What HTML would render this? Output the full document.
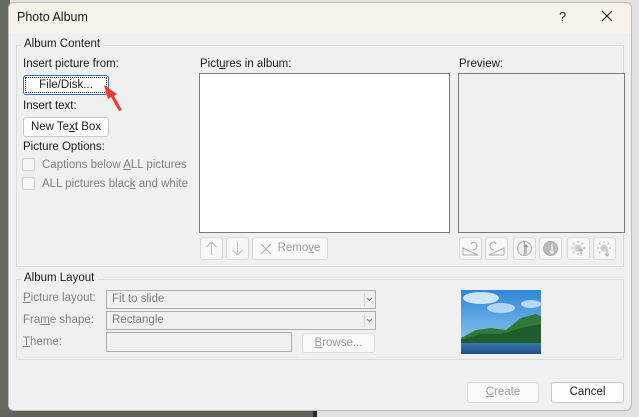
<!DOCTYPE html>
<html><head><style>
*{margin:0;padding:0;box-sizing:border-box}
body{width:639px;height:417px;overflow:hidden;position:relative;background:#e2e2e2;font-family:"Liberation Sans",sans-serif;font-size:11.5px;color:#1a1a1a}
.a{position:absolute;white-space:nowrap}
.g{color:#7f7f7f}
.btn{position:absolute;background:#fdfdfd;border:1px solid #c9c9c9;border-radius:3px;text-align:center;line-height:18px}
.dis{color:#9a9a9a;border-color:#dadada;background:#f9f9f9}
.grp{position:absolute;border:1px solid #dcdcdc}
.lbl{position:absolute;background:#f0f0f0;padding:0 3px}
.sel{position:absolute;border:1px solid #adadad;background:#f0f0f0;color:#7a7a7a;padding-left:5px;line-height:17px}
.sel:after{content:"";position:absolute;right:0;top:2px;width:10px;height:13px;border-left:1px solid #d5d5d5}
.chev{position:absolute;right:2px;top:6px}
.ib{position:absolute;width:23px;height:23px;border:1px solid #d8d8d8;border-radius:3px;background:#f7f7f7}
.cb{position:absolute;width:13px;height:13px;border:1px solid #cfcfcf;border-radius:2px;background:#f6f6f6}
u{text-decoration:underline}
</style></head><body>
<div class="a" style="left:0;top:0;width:10px;height:417px;background:#676b5f"></div>
<div class="a" style="left:0;top:410px;width:313px;height:7px;background:#5f6359"></div>
<div class="a" style="left:313px;top:410px;width:4px;height:7px;background:#2a2a2a"></div>
<div class="a" style="left:8px;top:2px;width:624px;height:409px;background:#f0f0f0;border:1px solid #bdbdbd;border-radius:6px;overflow:hidden">
 <div class="a" style="left:0;top:0;width:624px;height:30px;background:#f8f3ea"></div>
</div>
<div class="a" style="left:17px;top:10px;font-size:12.5px">Photo Album</div>
<div class="a" style="left:559px;top:9px;font-size:13px">?</div>
<svg class="a" style="left:601px;top:10px" width="12" height="12"><path d="M1 1L11 11M11 1L1 11" stroke="#222" stroke-width="1.2"/></svg>

<div class="grp" style="left:16px;top:45px;width:608px;height:222px"></div>
<div class="lbl" style="left:21px;top:38px">Album Content</div>
<div class="a" style="left:23px;top:58px">Insert picture from:</div>
<div class="btn" style="left:23px;top:75px;width:86px;height:20px;border:1px solid #2f6fc2;outline:1px dotted #222;outline-offset:-3px">File/Disk...</div>
<div class="a" style="left:23px;top:100px">Insert text:</div>
<div class="btn" style="left:23px;top:117px;width:86px;height:20px">New Te<u>x</u>t Box</div>
<div class="a" style="left:23px;top:141px">Picture Options:</div>
<div class="cb" style="left:22px;top:158px"></div>
<div class="a g" style="left:42px;top:159px">Captions below <u>A</u>LL pictures</div>
<div class="cb" style="left:22px;top:177px"></div>
<div class="a g" style="left:42px;top:178px">ALL pictures blac<u>k</u> and white</div>

<svg class="a" style="left:100px;top:82px" width="30" height="32"><path d="M4 3L17 12L14 14L22 28L19 29L11 15L8 17Z" fill="#ec3c2f"/></svg>

<div class="a" style="left:200px;top:58px">Pict<u>u</u>res in album:</div>
<div class="a" style="left:199px;top:73px;width:251px;height:160px;background:#fff;border:1px solid #7a7a7a"></div>
<div class="ib" style="left:200px;top:237px"><svg width="21" height="21"><path d="M10.5 4V17M5.5 9L10.5 4L15.5 9" stroke="#bbb" fill="none"/></svg></div>
<div class="ib" style="left:226px;top:237px"><svg width="21" height="21"><path d="M10.5 4V17M5.5 12L10.5 17L15.5 12" stroke="#bbb" fill="none"/></svg></div>
<div class="btn dis" style="left:252px;top:237px;width:76px;height:23px;line-height:21px;padding-left:18px">Remo<u>v</u>e
<svg class="a" style="left:7px;top:5px" width="12" height="12"><path d="M1 1L11 11M11 1L1 11" stroke="#aaa"/></svg></div>

<div class="a" style="left:459px;top:58px">Preview:</div>
<div class="a" style="left:458px;top:73px;width:167px;height:160px;background:#f0f0f0;border:1px solid #7a7a7a"></div>
<div class="ib" style="left:459px;top:237px"><svg width="21" height="21"><path d="M3 17H18L3 10Z" stroke="#aaa" fill="none"/><path d="M13 4A4 4 0 0 1 13 12M13 4L11 6" stroke="#aaa" fill="none"/></svg></div>
<div class="ib" style="left:485px;top:237px"><svg width="21" height="21"><path d="M3 17H18V10Z" stroke="#aaa" fill="none"/><path d="M8 4A4 4 0 0 0 8 12M8 4L10 6" stroke="#aaa" fill="none"/></svg></div>
<div class="ib" style="left:513px;top:237px"><svg width="21" height="21"><circle cx="10.5" cy="10.5" r="7" stroke="#aaa" fill="#eee"/><path d="M10.5 3.5V17.5" stroke="#aaa"/><path d="M12 16V7M10 9L12 7L14 9" stroke="#888" fill="none"/></svg></div>
<div class="ib" style="left:539px;top:237px"><svg width="21" height="21"><circle cx="10.5" cy="10.5" r="7" stroke="#aaa" fill="#bbb"/><path d="M12 6V15M10 13L12 15L14 13" stroke="#fff" fill="none"/></svg></div>
<div class="ib" style="left:567px;top:237px"><svg width="21" height="21"><circle cx="10" cy="10" r="3.5" fill="#ccc"/><path d="M10 3V5M10 15V17M3 10H5M15 10H17M5 5L6.5 6.5M15 5L13.5 6.5M5 15L6.5 13.5M13 11V18M11 13L13 11L15 13" stroke="#aaa" fill="none"/></svg></div>
<div class="ib" style="left:593px;top:237px"><svg width="21" height="21"><circle cx="10" cy="10" r="3.5" fill="#ccc"/><path d="M10 3V5M3 10H5M15 10H17M5 5L6.5 6.5M15 5L13.5 6.5M5 15L6.5 13.5M13 11V18M11 16L13 18L15 16" stroke="#aaa" fill="none"/></svg></div>

<div class="grp" style="left:16px;top:279px;width:608px;height:81px"></div>
<div class="lbl" style="left:21px;top:272px">Album Layout</div>
<div class="a g" style="left:23px;top:292px"><u>P</u>icture layout:</div>
<div class="sel" style="left:106px;top:290px;width:270px;height:19px">Fit to slide<svg class="chev" width="7" height="5"><path d="M1 1L3.5 3.5L6 1" stroke="#777" fill="none"/></svg></div>
<div class="a g" style="left:23px;top:314px">Fra<u>m</u>e shape:</div>
<div class="sel" style="left:106px;top:311px;width:270px;height:19px">Rectangle<svg class="chev" width="7" height="5"><path d="M1 1L3.5 3.5L6 1" stroke="#777" fill="none"/></svg></div>
<div class="a g" style="left:23px;top:336px"><u>T</u>heme:</div>
<div class="a" style="left:106px;top:332px;width:186px;height:20px;border:1px solid #adadad;background:#f0f0f0"></div>
<div class="btn dis" style="left:302px;top:333px;width:73px;height:20px"><u>B</u>rowse...</div>

<svg class="a" style="left:461px;top:290px" width="80" height="64">
<defs><linearGradient id="s" x1="0" y1="0" x2="0" y2="1"><stop offset="0" stop-color="#2e86d6"/><stop offset="1" stop-color="#9fd0f2"/></linearGradient>
<linearGradient id="w" x1="0" y1="0" x2="0" y2="1"><stop offset="0" stop-color="#3b78b0"/><stop offset="1" stop-color="#1c4f86"/></linearGradient></defs>
<rect width="80" height="64" fill="url(#s)"/>
<ellipse cx="20" cy="8" rx="18" ry="6" fill="#e8f3fb" opacity=".85"/>
<ellipse cx="40" cy="18" rx="14" ry="5" fill="#dbeefa" opacity=".7"/>
<ellipse cx="70" cy="14" rx="10" ry="4" fill="#e8f3fb" opacity=".7"/>
<path d="M0 48L15 40L30 38L45 40L60 28L75 24L80 26V54H0Z" fill="#2f7a3a"/>
<path d="M0 50L20 44L40 44L60 38L80 34V54H0Z" fill="#1f5e2c"/>
<rect y="53" width="80" height="11" fill="url(#w)"/>
</svg>

<div class="btn dis" style="left:467px;top:382px;width:72px;height:21px;line-height:19px"><u>C</u>reate</div>
<div class="btn" style="left:551px;top:382px;width:73px;height:21px;line-height:19px">Cancel</div>
</body></html>
